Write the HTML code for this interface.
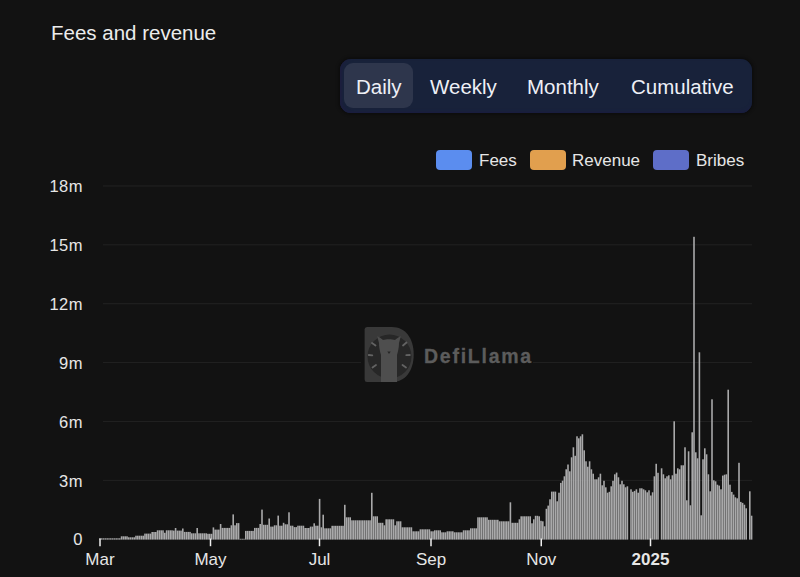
<!DOCTYPE html>
<html><head><meta charset="utf-8"><style>
html,body{margin:0;padding:0;}
body{width:800px;height:577px;overflow:hidden;background:#121212;font-family:"Liberation Sans",sans-serif;color:#e8e8e8;position:relative;}
.title{position:absolute;left:51px;top:20.5px;font-size:20.5px;color:#ececec;white-space:nowrap;}
.tog{position:absolute;left:339.5px;top:59px;width:412.5px;height:53.5px;border-radius:11px;background:#18223a;box-shadow:inset 3px 0 3px -1px #1c1e3e, inset 0 -3px 3px -1px #1b1f40, 0 0 3px 2px rgba(0,0,0,0.3);}
.sel{position:absolute;left:344px;top:63px;width:68.5px;height:45px;border-radius:9px;background:#2e364c;}
.tl{position:absolute;top:74.5px;font-size:20.5px;color:#eef0f6;white-space:nowrap;}
.lg{position:absolute;top:150px;width:36px;height:20px;border-radius:4px;}
.lt{position:absolute;top:151px;font-size:17px;color:#e6e6e6;white-space:nowrap;}
svg{position:absolute;left:0;top:0;}
</style></head><body>
<div class="title">Fees and revenue</div>
<div class="tog"></div>
<div class="sel"></div>
<div class="tl" style="left:356px">Daily</div>
<div class="tl" style="left:430px">Weekly</div>
<div class="tl" style="left:527px">Monthly</div>
<div class="tl" style="left:631px">Cumulative</div>
<div class="lg" style="left:436px;background:#5b8def"></div>
<div class="lt" style="left:479px">Fees</div>
<div class="lg" style="left:530px;background:#e19f4e"></div>
<div class="lt" style="left:572px">Revenue</div>
<div class="lg" style="left:653px;background:#5e6ec8"></div>
<div class="lt" style="left:696px">Bribes</div>
<svg width="800" height="577" viewBox="0 0 800 577">
<g stroke="#222222" stroke-width="1">
<line x1="103" y1="480.33" x2="752" y2="480.33"/><line x1="103" y1="421.46" x2="752" y2="421.46"/><line x1="103" y1="362.59" x2="752" y2="362.59"/><line x1="103" y1="303.72" x2="752" y2="303.72"/><line x1="103" y1="244.85" x2="752" y2="244.85"/><line x1="103" y1="185.98" x2="752" y2="185.98"/>
</g>
<g font-family="Liberation Sans" font-size="16.5" letter-spacing="0.4" fill="#e6e6e6" text-anchor="end">
<text x="82.8" y="545.40">0</text><text x="82.8" y="486.53">3m</text><text x="82.8" y="427.66">6m</text><text x="82.8" y="368.79">9m</text><text x="82.8" y="309.92">12m</text><text x="82.8" y="251.05">15m</text><text x="82.8" y="192.18">18m</text>
</g>
<rect x="361" y="322" width="172" height="66" fill="#121212"/>
<path d="M367 327 H392 C405 327 413.7 338 413.7 354.5 C413.7 371 405 382 392 382 H367 Q364.6 382 364.6 379.5 V329.5 Q364.6 327 367 327 Z" fill="#393939"/>
<circle cx="389.5" cy="356.5" r="22" fill="#272727"/>
<path d="M381 382 V355 C379.5 350 379 346 379 343 L377.2 336.2 C379.5 337 381.5 338.5 383 340 C386 339 392 339 395 340 C396.5 338.5 398.5 337 400.8 336.2 L399 343 C399 346 398.5 350 397 355 V382 Z" fill="#4e4e4e"/>
<path d="M387.3 351.5 h3.4 l-1.7 2.6 z" fill="#262626"/>
<g stroke="#636363" stroke-width="1.8" stroke-linecap="round">
<line x1="372" y1="343" x2="375.5" y2="345.5"/><line x1="368.8" y1="355" x2="372.3" y2="355.4"/><line x1="372.5" y1="367.5" x2="376" y2="365"/>
<line x1="406.5" y1="342.5" x2="403" y2="345.5"/><line x1="406.3" y1="355.2" x2="409.8" y2="355"/><line x1="402.5" y1="365" x2="406" y2="367.5"/>
</g>
<text x="424" y="363" font-family="Liberation Sans" font-weight="bold" font-size="19.5" letter-spacing="1.75" fill="#5c5c5c" stroke="#5c5c5c" stroke-width="0.3">DefiLlama</text>
<g fill="#a9a9aa"><rect x="99.20" y="538.30" width="1.6" height="1.30"/><rect x="101.00" y="538.30" width="1.6" height="1.30"/><rect x="102.80" y="538.30" width="1.6" height="1.30"/><rect x="104.60" y="538.30" width="1.6" height="1.30"/><rect x="106.40" y="538.30" width="1.6" height="1.30"/><rect x="108.20" y="538.30" width="1.6" height="1.30"/><rect x="110.00" y="538.30" width="1.6" height="1.30"/><rect x="111.80" y="538.30" width="1.6" height="1.30"/><rect x="113.60" y="538.30" width="1.6" height="1.30"/><rect x="115.40" y="538.30" width="1.6" height="1.30"/><rect x="117.20" y="538.30" width="1.6" height="1.30"/><rect x="119.00" y="538.30" width="1.6" height="1.30"/><rect x="120.80" y="536.30" width="1.6" height="3.30"/><rect x="122.60" y="536.30" width="1.6" height="3.30"/><rect x="124.40" y="536.30" width="1.6" height="3.30"/><rect x="126.20" y="536.30" width="1.6" height="3.30"/><rect x="128.00" y="537.30" width="1.6" height="2.30"/><rect x="129.80" y="537.30" width="1.6" height="2.30"/><rect x="131.60" y="537.30" width="1.6" height="2.30"/><rect x="133.40" y="537.30" width="1.6" height="2.30"/><rect x="135.20" y="535.70" width="1.6" height="3.90"/><rect x="137.00" y="535.70" width="1.6" height="3.90"/><rect x="138.80" y="535.70" width="1.6" height="3.90"/><rect x="140.60" y="535.70" width="1.6" height="3.90"/><rect x="142.40" y="535.70" width="1.6" height="3.90"/><rect x="144.20" y="533.60" width="1.6" height="6.00"/><rect x="146.00" y="533.60" width="1.6" height="6.00"/><rect x="147.80" y="533.60" width="1.6" height="6.00"/><rect x="149.60" y="533.60" width="1.6" height="6.00"/><rect x="151.40" y="532.00" width="1.6" height="7.60"/><rect x="153.20" y="532.00" width="1.6" height="7.60"/><rect x="155.00" y="532.00" width="1.6" height="7.60"/><rect x="156.80" y="530.30" width="1.6" height="9.30"/><rect x="158.60" y="530.30" width="1.6" height="9.30"/><rect x="160.40" y="530.30" width="1.6" height="9.30"/><rect x="162.20" y="530.30" width="1.6" height="9.30"/><rect x="164.00" y="532.80" width="1.6" height="6.80"/><rect x="165.80" y="530.30" width="1.6" height="9.30"/><rect x="167.60" y="530.30" width="1.6" height="9.30"/><rect x="169.40" y="530.30" width="1.6" height="9.30"/><rect x="171.20" y="530.30" width="1.6" height="9.30"/><rect x="173.00" y="530.60" width="1.6" height="9.00"/><rect x="174.80" y="528.00" width="1.6" height="11.60"/><rect x="176.60" y="530.60" width="1.6" height="9.00"/><rect x="178.40" y="530.60" width="1.6" height="9.00"/><rect x="180.20" y="530.60" width="1.6" height="9.00"/><rect x="182.00" y="528.50" width="1.6" height="11.10"/><rect x="183.80" y="531.90" width="1.6" height="7.70"/><rect x="185.60" y="531.90" width="1.6" height="7.70"/><rect x="187.40" y="531.90" width="1.6" height="7.70"/><rect x="189.20" y="531.90" width="1.6" height="7.70"/><rect x="191.00" y="533.30" width="1.6" height="6.30"/><rect x="192.80" y="533.30" width="1.6" height="6.30"/><rect x="194.60" y="533.30" width="1.6" height="6.30"/><rect x="196.40" y="528.00" width="1.6" height="11.60"/><rect x="198.20" y="533.30" width="1.6" height="6.30"/><rect x="200.00" y="533.30" width="1.6" height="6.30"/><rect x="201.80" y="533.30" width="1.6" height="6.30"/><rect x="203.60" y="533.30" width="1.6" height="6.30"/><rect x="205.40" y="533.30" width="1.6" height="6.30"/><rect x="207.20" y="533.80" width="1.6" height="5.80"/><rect x="209.00" y="533.80" width="1.6" height="5.80"/><rect x="210.80" y="533.80" width="1.6" height="5.80"/><rect x="212.60" y="527.40" width="1.6" height="12.20"/><rect x="214.40" y="529.60" width="1.6" height="10.00"/><rect x="216.20" y="529.60" width="1.6" height="10.00"/><rect x="218.00" y="529.60" width="1.6" height="10.00"/><rect x="219.80" y="524.00" width="1.6" height="15.60"/><rect x="221.60" y="527.90" width="1.6" height="11.70"/><rect x="223.40" y="527.90" width="1.6" height="11.70"/><rect x="225.20" y="527.90" width="1.6" height="11.70"/><rect x="227.00" y="527.90" width="1.6" height="11.70"/><rect x="228.80" y="527.90" width="1.6" height="11.70"/><rect x="230.60" y="525.30" width="1.6" height="14.30"/><rect x="232.40" y="514.40" width="1.6" height="25.20"/><rect x="234.20" y="525.30" width="1.6" height="14.30"/><rect x="236.00" y="523.10" width="1.6" height="16.50"/><rect x="237.80" y="523.10" width="1.6" height="16.50"/><rect x="239.60" y="538.80" width="1.6" height="0.80"/><rect x="241.40" y="538.80" width="1.6" height="0.80"/><rect x="243.20" y="538.80" width="1.6" height="0.80"/><rect x="245.00" y="530.90" width="1.6" height="8.70"/><rect x="246.80" y="530.90" width="1.6" height="8.70"/><rect x="248.60" y="530.90" width="1.6" height="8.70"/><rect x="250.40" y="530.90" width="1.6" height="8.70"/><rect x="252.20" y="530.90" width="1.6" height="8.70"/><rect x="254.00" y="527.90" width="1.6" height="11.70"/><rect x="255.80" y="527.90" width="1.6" height="11.70"/><rect x="257.60" y="527.90" width="1.6" height="11.70"/><rect x="259.40" y="524.00" width="1.6" height="15.60"/><rect x="261.20" y="509.60" width="1.6" height="30.00"/><rect x="263.00" y="524.80" width="1.6" height="14.80"/><rect x="264.80" y="524.80" width="1.6" height="14.80"/><rect x="266.60" y="524.80" width="1.6" height="14.80"/><rect x="268.40" y="518.50" width="1.6" height="21.10"/><rect x="270.20" y="526.60" width="1.6" height="13.00"/><rect x="272.00" y="526.60" width="1.6" height="13.00"/><rect x="273.80" y="525.30" width="1.6" height="14.30"/><rect x="275.60" y="525.30" width="1.6" height="14.30"/><rect x="277.40" y="515.60" width="1.6" height="24.00"/><rect x="279.20" y="525.70" width="1.6" height="13.90"/><rect x="281.00" y="525.70" width="1.6" height="13.90"/><rect x="282.80" y="522.80" width="1.6" height="16.80"/><rect x="284.60" y="524.30" width="1.6" height="15.30"/><rect x="286.40" y="524.30" width="1.6" height="15.30"/><rect x="288.20" y="512.30" width="1.6" height="27.30"/><rect x="290.00" y="525.70" width="1.6" height="13.90"/><rect x="291.80" y="525.70" width="1.6" height="13.90"/><rect x="293.60" y="527.10" width="1.6" height="12.50"/><rect x="295.40" y="527.10" width="1.6" height="12.50"/><rect x="297.20" y="525.70" width="1.6" height="13.90"/><rect x="299.00" y="525.70" width="1.6" height="13.90"/><rect x="300.80" y="525.70" width="1.6" height="13.90"/><rect x="302.60" y="525.70" width="1.6" height="13.90"/><rect x="304.40" y="528.00" width="1.6" height="11.60"/><rect x="306.20" y="528.00" width="1.6" height="11.60"/><rect x="308.00" y="528.00" width="1.6" height="11.60"/><rect x="309.80" y="526.60" width="1.6" height="13.00"/><rect x="311.60" y="526.60" width="1.6" height="13.00"/><rect x="313.40" y="523.30" width="1.6" height="16.30"/><rect x="315.20" y="525.70" width="1.6" height="13.90"/><rect x="317.00" y="525.70" width="1.6" height="13.90"/><rect x="318.80" y="498.90" width="1.6" height="40.70"/><rect x="320.60" y="527.30" width="1.6" height="12.30"/><rect x="322.40" y="514.70" width="1.6" height="24.90"/><rect x="324.20" y="528.30" width="1.6" height="11.30"/><rect x="326.00" y="528.30" width="1.6" height="11.30"/><rect x="327.80" y="528.30" width="1.6" height="11.30"/><rect x="329.60" y="528.30" width="1.6" height="11.30"/><rect x="331.40" y="525.80" width="1.6" height="13.80"/><rect x="333.20" y="525.80" width="1.6" height="13.80"/><rect x="335.00" y="525.80" width="1.6" height="13.80"/><rect x="336.80" y="525.80" width="1.6" height="13.80"/><rect x="338.60" y="525.80" width="1.6" height="13.80"/><rect x="340.40" y="525.80" width="1.6" height="13.80"/><rect x="342.20" y="525.80" width="1.6" height="13.80"/><rect x="344.00" y="504.80" width="1.6" height="34.80"/><rect x="345.80" y="517.30" width="1.6" height="22.30"/><rect x="347.60" y="517.30" width="1.6" height="22.30"/><rect x="349.40" y="517.30" width="1.6" height="22.30"/><rect x="351.20" y="520.30" width="1.6" height="19.30"/><rect x="353.00" y="520.30" width="1.6" height="19.30"/><rect x="354.80" y="520.30" width="1.6" height="19.30"/><rect x="356.60" y="520.30" width="1.6" height="19.30"/><rect x="358.40" y="520.30" width="1.6" height="19.30"/><rect x="360.20" y="520.30" width="1.6" height="19.30"/><rect x="362.00" y="520.30" width="1.6" height="19.30"/><rect x="363.80" y="520.30" width="1.6" height="19.30"/><rect x="365.60" y="520.30" width="1.6" height="19.30"/><rect x="367.40" y="520.30" width="1.6" height="19.30"/><rect x="369.20" y="520.30" width="1.6" height="19.30"/><rect x="371.00" y="492.80" width="1.6" height="46.80"/><rect x="372.80" y="516.30" width="1.6" height="23.30"/><rect x="374.60" y="516.30" width="1.6" height="23.30"/><rect x="376.40" y="516.30" width="1.6" height="23.30"/><rect x="378.20" y="522.80" width="1.6" height="16.80"/><rect x="380.00" y="522.80" width="1.6" height="16.80"/><rect x="381.80" y="522.80" width="1.6" height="16.80"/><rect x="383.60" y="525.30" width="1.6" height="14.30"/><rect x="385.40" y="519.30" width="1.6" height="20.30"/><rect x="387.20" y="519.30" width="1.6" height="20.30"/><rect x="389.00" y="519.30" width="1.6" height="20.30"/><rect x="390.80" y="519.30" width="1.6" height="20.30"/><rect x="392.60" y="519.30" width="1.6" height="20.30"/><rect x="394.40" y="525.30" width="1.6" height="14.30"/><rect x="396.20" y="521.30" width="1.6" height="18.30"/><rect x="398.00" y="521.30" width="1.6" height="18.30"/><rect x="399.80" y="521.30" width="1.6" height="18.30"/><rect x="401.60" y="527.30" width="1.6" height="12.30"/><rect x="403.40" y="527.30" width="1.6" height="12.30"/><rect x="405.20" y="527.30" width="1.6" height="12.30"/><rect x="407.00" y="527.30" width="1.6" height="12.30"/><rect x="408.80" y="527.30" width="1.6" height="12.30"/><rect x="410.60" y="527.30" width="1.6" height="12.30"/><rect x="412.40" y="531.30" width="1.6" height="8.30"/><rect x="414.20" y="531.30" width="1.6" height="8.30"/><rect x="416.00" y="531.30" width="1.6" height="8.30"/><rect x="417.80" y="531.30" width="1.6" height="8.30"/><rect x="419.60" y="529.30" width="1.6" height="10.30"/><rect x="421.40" y="529.30" width="1.6" height="10.30"/><rect x="423.20" y="529.30" width="1.6" height="10.30"/><rect x="425.00" y="529.30" width="1.6" height="10.30"/><rect x="426.80" y="529.30" width="1.6" height="10.30"/><rect x="428.60" y="529.30" width="1.6" height="10.30"/><rect x="430.40" y="531.30" width="1.6" height="8.30"/><rect x="432.20" y="531.30" width="1.6" height="8.30"/><rect x="434.00" y="530.30" width="1.6" height="9.30"/><rect x="435.80" y="530.30" width="1.6" height="9.30"/><rect x="437.60" y="530.30" width="1.6" height="9.30"/><rect x="439.40" y="530.30" width="1.6" height="9.30"/><rect x="441.20" y="532.30" width="1.6" height="7.30"/><rect x="443.00" y="532.30" width="1.6" height="7.30"/><rect x="444.80" y="532.30" width="1.6" height="7.30"/><rect x="446.60" y="531.30" width="1.6" height="8.30"/><rect x="448.40" y="531.30" width="1.6" height="8.30"/><rect x="450.20" y="531.30" width="1.6" height="8.30"/><rect x="452.00" y="531.30" width="1.6" height="8.30"/><rect x="453.80" y="532.30" width="1.6" height="7.30"/><rect x="455.60" y="532.30" width="1.6" height="7.30"/><rect x="457.40" y="532.30" width="1.6" height="7.30"/><rect x="459.20" y="532.30" width="1.6" height="7.30"/><rect x="461.00" y="532.30" width="1.6" height="7.30"/><rect x="462.80" y="530.30" width="1.6" height="9.30"/><rect x="464.60" y="530.30" width="1.6" height="9.30"/><rect x="466.40" y="530.30" width="1.6" height="9.30"/><rect x="468.20" y="530.30" width="1.6" height="9.30"/><rect x="470.00" y="528.30" width="1.6" height="11.30"/><rect x="471.80" y="528.30" width="1.6" height="11.30"/><rect x="473.60" y="528.30" width="1.6" height="11.30"/><rect x="475.40" y="528.30" width="1.6" height="11.30"/><rect x="477.20" y="517.30" width="1.6" height="22.30"/><rect x="479.00" y="517.30" width="1.6" height="22.30"/><rect x="480.80" y="517.30" width="1.6" height="22.30"/><rect x="482.60" y="517.30" width="1.6" height="22.30"/><rect x="484.40" y="517.30" width="1.6" height="22.30"/><rect x="486.20" y="517.30" width="1.6" height="22.30"/><rect x="488.00" y="519.80" width="1.6" height="19.80"/><rect x="489.80" y="519.80" width="1.6" height="19.80"/><rect x="491.60" y="519.80" width="1.6" height="19.80"/><rect x="493.40" y="519.80" width="1.6" height="19.80"/><rect x="495.20" y="519.80" width="1.6" height="19.80"/><rect x="497.00" y="519.80" width="1.6" height="19.80"/><rect x="498.80" y="521.30" width="1.6" height="18.30"/><rect x="500.60" y="521.30" width="1.6" height="18.30"/><rect x="502.40" y="521.30" width="1.6" height="18.30"/><rect x="504.20" y="521.30" width="1.6" height="18.30"/><rect x="506.00" y="521.30" width="1.6" height="18.30"/><rect x="507.80" y="521.30" width="1.6" height="18.30"/><rect x="509.60" y="502.30" width="1.6" height="37.30"/><rect x="511.40" y="522.80" width="1.6" height="16.80"/><rect x="513.20" y="522.80" width="1.6" height="16.80"/><rect x="515.00" y="522.80" width="1.6" height="16.80"/><rect x="516.80" y="522.80" width="1.6" height="16.80"/><rect x="518.60" y="519.30" width="1.6" height="20.30"/><rect x="520.40" y="516.30" width="1.6" height="23.30"/><rect x="522.20" y="516.30" width="1.6" height="23.30"/><rect x="524.00" y="516.30" width="1.6" height="23.30"/><rect x="525.80" y="516.30" width="1.6" height="23.30"/><rect x="527.60" y="516.30" width="1.6" height="23.30"/><rect x="529.40" y="516.30" width="1.6" height="23.30"/><rect x="531.20" y="523.30" width="1.6" height="16.30"/><rect x="533.00" y="519.30" width="1.6" height="20.30"/><rect x="534.80" y="515.80" width="1.6" height="23.80"/><rect x="536.60" y="515.80" width="1.6" height="23.80"/><rect x="538.40" y="516.30" width="1.6" height="23.30"/><rect x="540.20" y="520.80" width="1.6" height="18.80"/><rect x="542.00" y="521.30" width="1.6" height="18.30"/><rect x="543.80" y="526.30" width="1.6" height="13.30"/><rect x="545.60" y="508.80" width="1.6" height="30.80"/><rect x="547.40" y="505.60" width="1.6" height="34.00"/><rect x="549.20" y="499.30" width="1.6" height="40.30"/><rect x="551.00" y="491.60" width="1.6" height="48.00"/><rect x="552.80" y="491.60" width="1.6" height="48.00"/><rect x="554.60" y="491.60" width="1.6" height="48.00"/><rect x="556.40" y="501.30" width="1.6" height="38.30"/><rect x="558.20" y="492.70" width="1.6" height="46.90"/><rect x="560.00" y="482.90" width="1.6" height="56.70"/><rect x="561.80" y="480.70" width="1.6" height="58.90"/><rect x="563.60" y="476.30" width="1.6" height="63.30"/><rect x="565.40" y="469.30" width="1.6" height="70.30"/><rect x="567.20" y="464.50" width="1.6" height="75.10"/><rect x="569.00" y="471.30" width="1.6" height="68.30"/><rect x="570.80" y="457.30" width="1.6" height="82.30"/><rect x="572.60" y="447.30" width="1.6" height="92.30"/><rect x="574.40" y="455.80" width="1.6" height="83.80"/><rect x="576.20" y="436.30" width="1.6" height="103.30"/><rect x="578.00" y="438.30" width="1.6" height="101.30"/><rect x="579.80" y="436.30" width="1.6" height="103.30"/><rect x="581.60" y="434.30" width="1.6" height="105.30"/><rect x="583.40" y="450.30" width="1.6" height="89.30"/><rect x="585.20" y="461.30" width="1.6" height="78.30"/><rect x="587.00" y="466.70" width="1.6" height="72.90"/><rect x="588.80" y="461.30" width="1.6" height="78.30"/><rect x="590.60" y="469.30" width="1.6" height="70.30"/><rect x="592.40" y="473.70" width="1.6" height="65.90"/><rect x="594.20" y="479.30" width="1.6" height="60.30"/><rect x="596.00" y="479.30" width="1.6" height="60.30"/><rect x="597.80" y="477.30" width="1.6" height="62.30"/><rect x="599.60" y="473.70" width="1.6" height="65.90"/><rect x="601.40" y="485.30" width="1.6" height="54.30"/><rect x="603.20" y="480.80" width="1.6" height="58.80"/><rect x="605.00" y="487.30" width="1.6" height="52.30"/><rect x="606.80" y="492.70" width="1.6" height="46.90"/><rect x="608.60" y="491.80" width="1.6" height="47.80"/><rect x="610.40" y="486.30" width="1.6" height="53.30"/><rect x="612.20" y="480.80" width="1.6" height="58.80"/><rect x="614.00" y="474.30" width="1.6" height="65.30"/><rect x="615.80" y="472.60" width="1.6" height="67.00"/><rect x="617.60" y="477.30" width="1.6" height="62.30"/><rect x="619.40" y="484.30" width="1.6" height="55.30"/><rect x="621.20" y="480.80" width="1.6" height="58.80"/><rect x="623.00" y="484.30" width="1.6" height="55.30"/><rect x="624.80" y="487.30" width="1.6" height="52.30"/><rect x="626.60" y="486.30" width="1.6" height="53.30"/><rect x="630.20" y="489.30" width="1.6" height="50.30"/><rect x="632.00" y="491.80" width="1.6" height="47.80"/><rect x="633.80" y="490.90" width="1.6" height="48.70"/><rect x="635.60" y="489.30" width="1.6" height="50.30"/><rect x="637.40" y="492.70" width="1.6" height="46.90"/><rect x="639.20" y="488.30" width="1.6" height="51.30"/><rect x="641.00" y="488.30" width="1.6" height="51.30"/><rect x="642.80" y="489.30" width="1.6" height="50.30"/><rect x="644.60" y="490.30" width="1.6" height="49.30"/><rect x="646.40" y="492.30" width="1.6" height="47.30"/><rect x="648.20" y="490.30" width="1.6" height="49.30"/><rect x="650.00" y="495.50" width="1.6" height="44.10"/><rect x="651.80" y="492.30" width="1.6" height="47.30"/><rect x="653.60" y="476.30" width="1.6" height="63.30"/><rect x="655.40" y="463.80" width="1.6" height="75.80"/><rect x="657.20" y="472.80" width="1.6" height="66.80"/><rect x="660.80" y="468.30" width="1.6" height="71.30"/><rect x="662.60" y="474.30" width="1.6" height="65.30"/><rect x="664.40" y="478.30" width="1.6" height="61.30"/><rect x="666.20" y="476.30" width="1.6" height="63.30"/><rect x="668.00" y="475.30" width="1.6" height="64.30"/><rect x="669.80" y="479.30" width="1.6" height="60.30"/><rect x="671.60" y="475.30" width="1.6" height="64.30"/><rect x="673.40" y="421.30" width="1.6" height="118.30"/><rect x="675.20" y="473.70" width="1.6" height="65.90"/><rect x="677.00" y="468.30" width="1.6" height="71.30"/><rect x="678.80" y="469.30" width="1.6" height="70.30"/><rect x="680.60" y="465.30" width="1.6" height="74.30"/><rect x="682.40" y="465.30" width="1.6" height="74.30"/><rect x="684.20" y="447.30" width="1.6" height="92.30"/><rect x="686.00" y="500.30" width="1.6" height="39.30"/><rect x="687.80" y="451.30" width="1.6" height="88.30"/><rect x="689.60" y="505.30" width="1.6" height="34.30"/><rect x="691.40" y="432.30" width="1.6" height="107.30"/><rect x="693.20" y="236.80" width="1.6" height="302.80"/><rect x="695.00" y="452.30" width="1.6" height="87.30"/><rect x="696.80" y="458.30" width="1.6" height="81.30"/><rect x="698.60" y="352.30" width="1.6" height="187.30"/><rect x="700.40" y="515.30" width="1.6" height="24.30"/><rect x="702.20" y="459.30" width="1.6" height="80.30"/><rect x="704.00" y="448.30" width="1.6" height="91.30"/><rect x="705.80" y="454.30" width="1.6" height="85.30"/><rect x="707.60" y="474.30" width="1.6" height="65.30"/><rect x="709.40" y="491.30" width="1.6" height="48.30"/><rect x="711.20" y="399.30" width="1.6" height="140.30"/><rect x="713.00" y="480.30" width="1.6" height="59.30"/><rect x="714.80" y="481.30" width="1.6" height="58.30"/><rect x="716.60" y="484.70" width="1.6" height="54.90"/><rect x="718.40" y="485.60" width="1.6" height="54.00"/><rect x="720.20" y="489.30" width="1.6" height="50.30"/><rect x="722.00" y="475.60" width="1.6" height="64.00"/><rect x="723.80" y="474.70" width="1.6" height="64.90"/><rect x="725.60" y="474.30" width="1.6" height="65.30"/><rect x="727.40" y="389.70" width="1.6" height="149.90"/><rect x="729.20" y="484.70" width="1.6" height="54.90"/><rect x="731.00" y="491.90" width="1.6" height="47.70"/><rect x="732.80" y="494.60" width="1.6" height="45.00"/><rect x="734.60" y="497.30" width="1.6" height="42.30"/><rect x="736.40" y="498.30" width="1.6" height="41.30"/><rect x="738.20" y="462.80" width="1.6" height="76.80"/><rect x="740.00" y="501.90" width="1.6" height="37.70"/><rect x="741.80" y="502.90" width="1.6" height="36.70"/><rect x="743.60" y="504.70" width="1.6" height="34.90"/><rect x="745.40" y="508.30" width="1.6" height="31.30"/><rect x="749.00" y="491.30" width="1.6" height="48.30"/><rect x="750.80" y="515.70" width="1.6" height="23.90"/></g>

<g stroke="#eee" stroke-width="1.5">
<line x1="100" y1="538.5" x2="100" y2="546.2"/><line x1="210.5" y1="538.5" x2="210.5" y2="546.2"/><line x1="319.5" y1="538.5" x2="319.5" y2="546.2"/><line x1="431" y1="538.5" x2="431" y2="546.2"/><line x1="541.25" y1="538.5" x2="541.25" y2="546.2"/><line x1="650.5" y1="538.5" x2="650.5" y2="546.2"/>
</g>
<g font-family="Liberation Sans" font-size="17" fill="#e6e6e6" text-anchor="middle">
<text x="100" y="565">Mar</text><text x="210.5" y="565">May</text><text x="319.5" y="565">Jul</text><text x="431" y="565">Sep</text><text x="541.25" y="565">Nov</text>
<text x="650.5" y="565" font-weight="bold">2025</text>
</g>
</svg>
</body></html>
